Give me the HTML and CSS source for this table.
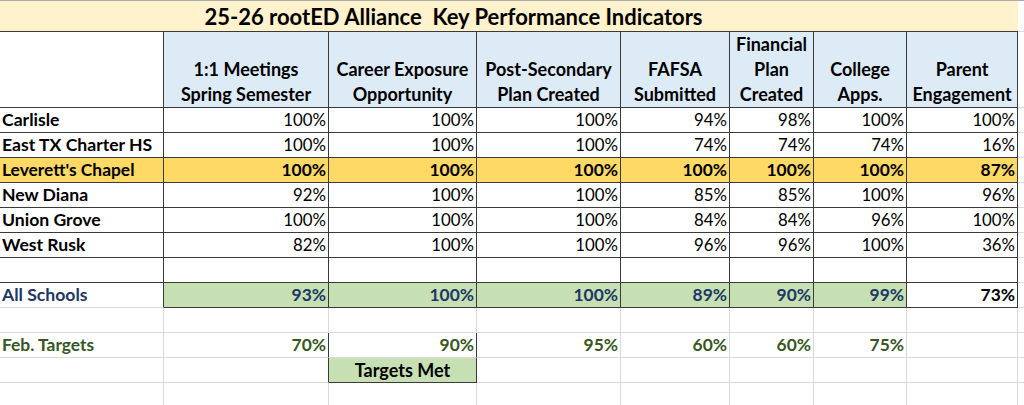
FILE: index.html
```html
<!DOCTYPE html>
<html lang="en">
<head>
<meta charset="utf-8">
<title>25-26 rootED Alliance Key Performance Indicators</title>
<link rel="stylesheet" href="styles.css">
</head>
<body>
<table class="sheet">
  <colgroup>
    <col class="w-name"><col class="w-meet"><col class="w-career"><col class="w-post"><col class="w-fafsa"><col class="w-fin"><col class="w-college"><col class="w-parent"><col class="w-spill">
  </colgroup>
  <tbody>
    <tr class="title-row">
      <td colspan="7" class="title">25-26 rootED Alliance  Key Performance Indicators</td>
      <td class="title-fill"></td>
      <td class="spill"></td>
    </tr>
    <tr class="head-row">
      <td class="b corner"></td>
      <th class="b head">1:1 Meetings<br>Spring Semester</th>
      <th class="b head">Career Exposure<br>Opportunity</th>
      <th class="b head">Post-Secondary<br>Plan Created</th>
      <th class="b head">FAFSA<br>Submitted</th>
      <th class="b head">Financial<br>Plan<br>Created</th>
      <th class="b head">College<br>Apps.</th>
      <th class="b head">Parent<br>Engagement</th>
      <td class="spill"></td>
    </tr>
    <tr>
      <td class="b name">Carlisle</td>
      <td class="b num">100%</td><td class="b num">100%</td><td class="b num">100%</td><td class="b num">94%</td><td class="b num">98%</td><td class="b num">100%</td><td class="b num">100%</td>
      <td class="spill"></td>
    </tr>
    <tr>
      <td class="b name">East TX Charter HS</td>
      <td class="b num">100%</td><td class="b num">100%</td><td class="b num">100%</td><td class="b num">74%</td><td class="b num">74%</td><td class="b num">74%</td><td class="b num">16%</td>
      <td class="spill"></td>
    </tr>
    <tr class="highlight">
      <td class="b name">Leverett's Chapel</td>
      <td class="b num">100%</td><td class="b num">100%</td><td class="b num">100%</td><td class="b num">100%</td><td class="b num">100%</td><td class="b num">100%</td><td class="b num">87%</td>
      <td class="spill"></td>
    </tr>
    <tr>
      <td class="b name">New Diana</td>
      <td class="b num">92%</td><td class="b num">100%</td><td class="b num">100%</td><td class="b num">85%</td><td class="b num">85%</td><td class="b num">100%</td><td class="b num">96%</td>
      <td class="spill"></td>
    </tr>
    <tr>
      <td class="b name">Union Grove</td>
      <td class="b num">100%</td><td class="b num">100%</td><td class="b num">100%</td><td class="b num">84%</td><td class="b num">84%</td><td class="b num">96%</td><td class="b num">100%</td>
      <td class="spill"></td>
    </tr>
    <tr>
      <td class="b name">West Rusk</td>
      <td class="b num">82%</td><td class="b num">100%</td><td class="b num">100%</td><td class="b num">96%</td><td class="b num">96%</td><td class="b num">100%</td><td class="b num">36%</td>
      <td class="spill"></td>
    </tr>
    <tr>
      <td class="b"></td><td class="b"></td><td class="b"></td><td class="b"></td><td class="b"></td><td class="b"></td><td class="b"></td><td class="b"></td>
      <td class="spill"></td>
    </tr>
    <tr class="all-row">
      <td class="name all-label edge-right">All Schools</td>
      <td class="b num met">93%</td><td class="b num met">100%</td><td class="b num met">100%</td><td class="b num met">89%</td><td class="b num met">90%</td><td class="b num met">99%</td>
      <td class="b num plain">73%</td>
      <td class="spill"></td>
    </tr>
    <tr>
      <td></td><td></td><td></td><td></td><td></td><td></td><td></td><td></td>
      <td class="spill"></td>
    </tr>
    <tr class="target-row">
      <td class="name target-label">Feb. Targets</td>
      <td class="num edge-right">70%</td><td class="num edge-right">90%</td><td class="num">95%</td><td class="num">60%</td><td class="num">60%</td><td class="num">75%</td><td></td>
      <td class="spill"></td>
    </tr>
    <tr>
      <td></td>
      <td class="edge-right"></td>
      <td class="met-key edge-right">Targets Met</td>
      <td></td><td></td><td></td><td></td><td></td>
      <td class="spill"></td>
    </tr>
    <tr>
      <td></td><td></td><td></td><td></td><td></td><td></td><td></td><td></td>
      <td class="spill"></td>
    </tr>
  </tbody>
</table>
</body>
</html>
```
FILE: styles.css
```css
html, body {
  margin: 0;
  padding: 0;
  overflow: hidden;
  background: #ffffff;
}

body {
  width: 1024px;
  height: 405px;
}

.sheet {
  border-collapse: separate;
  border-spacing: 0;
  table-layout: fixed;
  width: 1038px;
  font-family: Lato, "Open Sans", sans-serif;
  font-size: 16.8px;
  color: #000000;
}

.w-name { width: 164px; }
.w-meet { width: 165px; }
.w-career { width: 148px; }
.w-post { width: 144px; }
.w-fafsa { width: 109px; }
.w-fin { width: 84px; }
.w-college { width: 93px; }
.w-parent { width: 111px; }
.w-spill { width: 20px; }

.sheet tr { height: 25px; }

.sheet td,
.sheet th {
  box-sizing: border-box;
  padding: 0;
  border-right: 1px solid #dadada;
  border-bottom: 1px solid #dadada;
  line-height: 24px;
  vertical-align: bottom;
  white-space: nowrap;
  overflow: hidden;
  font-weight: normal;
  text-align: left;
}

/* bordered table region */
.sheet .b {
  border-right-color: #3a3a3a;
  border-bottom-color: #3a3a3a;
}

.sheet .edge-right { border-right-color: #3a3a3a; }

.sheet .spill { border-right: none; }

/* title band */
.sheet .title-row { height: 32px; }

.sheet .title-row td {
  border-top: 1px solid #a9a9a9;
  border-bottom: 1px solid #3a3a3a;
  border-right: none;
  background: #fff2cc;
}

.sheet .title-row .spill {
  background: #ffffff;
  border-bottom-color: #dadada;
}

.sheet .title {
  font-weight: 700;
  font-size: 22px;
  line-height: 29px;
  text-align: center;
  white-space: pre;
}

/* header */
.sheet .head-row { height: 76px; }

.sheet .head {
  background: #ddebf7;
  font-weight: 700;
  font-size: 18px;
  text-align: center;
  line-height: 25px;
}

/* body cells */
.sheet .name {
  font-weight: 700;
  font-size: 17.6px;
  padding-left: 2px;
}

.sheet .num {
  text-align: right;
  padding-right: 2px;
}

.sheet .highlight td:not(.spill) {
  background: #ffd966;
  font-weight: 700;
  font-size: 17.4px;
}

/* summary row */
.sheet .all-label { color: #203764; }

.sheet .met {
  background: #c6e0b4;
  color: #203764;
  font-weight: 700;
  font-size: 17.4px;
}

.sheet .plain {
  font-weight: 700;
  font-size: 17.4px;
}

/* targets */
.sheet .target-row td {
  color: #375623;
  font-weight: 700;
  font-size: 17.4px;
}

.sheet .met-key {
  background: #c6e0b4;
  border-bottom-color: #3a3a3a;
  font-weight: 700;
  font-size: 18px;
  text-align: center;
}
```
